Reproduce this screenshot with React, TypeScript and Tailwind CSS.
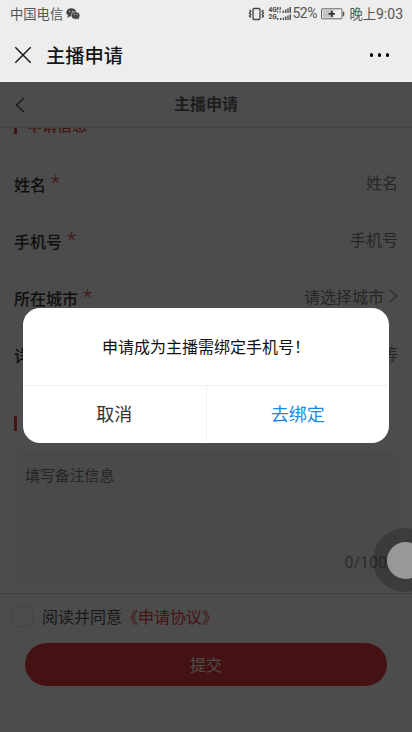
import type { ReactNode } from "react";

function StatusBar() {
  return (
    <div className="flex h-7 shrink-0 items-center justify-between pl-[10px] pr-[9px] text-[#555]">
      <div className="flex items-center gap-[3px]">
        <span className="text-[13.3px] leading-7">中国电信</span>
        <svg width="14" height="12" viewBox="0 0 14 12">
          <ellipse cx="5.3" cy="4.4" rx="5" ry="4.2" fill="#444" />
          <path d="M2 7.4 1.4 10l2.5-1.5z" fill="#444" />
          <ellipse cx="9.6" cy="7.6" rx="4.3" ry="3.6" fill="#444" stroke="#ededed" strokeWidth=".6" />
          <path d="m11 10.6 1.8 1.2-.4-2z" fill="#444" />
          <circle cx="3.7" cy="3.3" r=".65" fill="#ededed" />
          <circle cx="6.9" cy="3.3" r=".65" fill="#ededed" />
          <circle cx="8.2" cy="6.6" r=".55" fill="#ededed" />
          <circle cx="11" cy="6.6" r=".55" fill="#ededed" />
        </svg>
      </div>
      <div className="flex items-center">
        <svg width="17" height="14" viewBox="0 0 17 14" fill="none" stroke="#444">
          <rect x="5" y="1.5" width="7" height="11" rx="1" strokeWidth="1.3" />
          <path d="m1.5 3 1.3 1.5L1.5 6l1.3 1.5L1.5 9l1.3 1.5M15.5 3l-1.3 1.5L15.5 6l-1.3 1.5L15.5 9l-1.3 1.5" strokeWidth="1.4" />
        </svg>
        <div className="ml-[3px] flex w-[9px] flex-col font-[Roboto] text-[6.5px] font-bold leading-[7px] text-[#444]">
          <span>4G</span>
          <span>2G</span>
        </div>
        <svg className="mr-[1px]" width="14" height="14" viewBox="0 0 14 14" fill="#555">
          <path d="M0 0h1.3v3H0zM2.5 0h1.3v3H2.5zM0 4h1.3v1.5H0zM2.5 4h1.3v1.5H2.5zM5.5 3.5h1.5V6H5.5zM8 2.5h1.5V6H8zM10.3 1.2h1.4V6h-1.4zM12.5 0H14v6h-1.5zM0 11h1.5v2H0zM3 11h1.5v2H3zM5.7 10.5h1.5V13H5.7zM8 9.5h1.5V13H8zM10.3 8.5h1.4V13h-1.4zM12.5 7.3H14V13h-1.5z" />
        </svg>
        <span className="-mt-px w-[26px] font-[Roboto] text-[14px] tracking-[-0.4px]">52%</span>
        <svg className="ml-[3px] mr-[4px]" width="24" height="12" viewBox="0 0 24 12">
          <rect x=".5" y=".8" width="20.5" height="10" rx=".6" fill="#eee" stroke="#666" />
          <rect x="1.7" y="2" width="11" height="7.6" fill="#c4c4c4" />
          <path d="M7.5 5.8h6.4M10.7 2.7v6.2" stroke="#333" strokeWidth="1.7" />
          <path d="M22.5 3.7v4.5" stroke="#555" strokeWidth="1.5" />
        </svg>
        <span className="text-[13.3px]">晚上</span>
        <span className="w-[27px] font-[Roboto] text-[14px]">9:03</span>
      </div>
    </div>
  );
}

function BrowserBar() {
  return (
    <div className="flex h-[54px] shrink-0 items-center pl-[14px] pr-[23px]">
      <svg width="18" height="18" viewBox="0 0 18 18" stroke="#1c1c1c" strokeWidth="1.5">
        <path d="m1.3 1.3 15.4 15.4M16.7 1.3 1.3 16.7" />
      </svg>
      <h1 className="ml-[14px] text-[19.3px] font-medium leading-7 text-[#161616]">主播申请</h1>
      <div className="ml-auto flex gap-[4.5px]">
        <i className="size-[3.5px] rounded-full bg-black" />
        <i className="size-[3.5px] rounded-full bg-black" />
        <i className="size-[3.5px] rounded-full bg-black" />
      </div>
    </div>
  );
}

function Field({ label, required, children }: { label: string; required?: boolean; children: ReactNode }) {
  return (
    <div className="ml-[14px] flex h-[57px] shrink-0 items-center justify-between border-b border-[#f0f0f0] pr-[14px] text-[16px] leading-6">
      <div className="mt-[6px] flex font-medium text-[#333]">
        {label}
        {required && <span className="-mt-px ml-[5px] font-[Roboto] text-[21px] font-light text-[#e64340]">*</span>}
      </div>
      <div className="mt-[2px] flex items-center text-[#808080]">{children}</div>
    </div>
  );
}

function SectionTitle({ children }: { children: ReactNode }) {
  return (
    <div className="flex h-[54px] shrink-0 items-center pl-[14px] text-[15px] font-medium text-[#e64340]">
      <i className="mr-[10px] h-[15px] w-[3px] bg-[#e64340]" />
      <span className="-mt-[2px]">{children}</span>
    </div>
  );
}

function ApplyPage() {
  return (
    <div className="flex h-full flex-col bg-white">
      <header className="flex h-[46px] shrink-0 items-center border-b border-[#e6e6e6] px-[15px]">
        <svg width="10" height="16" viewBox="0 0 10 16" fill="none" stroke="#555" strokeWidth="1.4">
          <path d="M9 1 1.5 8 9 15" />
        </svg>
        <h2 className="-mt-[3px] flex-1 pr-[10px] text-center text-[16px] font-bold text-[#666]">主播申请</h2>
      </header>
      <div className="flex h-[465px] shrink-0 flex-col overflow-hidden">
        <div className="-mt-[29px] shrink-0">
          <SectionTitle>申请信息</SectionTitle>
        </div>
        <Field label="姓名" required>姓名</Field>
        <Field label="手机号" required>手机号</Field>
        <Field label="所在城市" required>
          请选择城市
          <svg className="ml-[5px]" width="9" height="14" viewBox="0 0 9 14" fill="none" stroke="#999" strokeWidth="1.3">
            <path d="m1 1 7 6-7 6" />
          </svg>
        </Field>
        <Field label="详细地址">街道、门牌号等</Field>
        <div className="mt-[15px] shrink-0">
          <SectionTitle>备注</SectionTitle>
        </div>
        <div className="mx-[14px] mt-[2px] flex h-[130px] shrink-0 flex-col justify-between rounded-[8px] bg-[#f7f7f7] px-[11px] pb-[9px] pt-[11px] text-[#808080]">
          <span className="text-[14.9px] leading-6">填写备注信息</span>
          <span className="self-end font-[Roboto] text-[16px] leading-5 text-[#999]">0/100</span>
        </div>
      </div>
      <footer className="flex flex-1 flex-col border-t border-[#ddd]">
        <div className="mt-[9px] flex h-[26px] items-center pl-[11px] text-[16px]">
          <i className="mr-[8px] size-[23px] rounded-full border border-[#dcdcdc]" />
          <span className="text-[#555]">阅读并同意</span>
          <span className="text-[#e64340]">《申请协议》</span>
        </div>
        <button className="mx-[25px] mt-[14px] h-[43px] rounded-full bg-[#e43c3c] pb-[2px] text-[16px] text-white">提交</button>
      </footer>
    </div>
  );
}

function BindDialog() {
  return (
    <div className="absolute inset-0 flex justify-center bg-black/70">
      <div className="mt-[225.5px] flex h-[135px] w-[366px] flex-col overflow-hidden rounded-[17px] bg-white">
        <p className="flex h-[77px] items-center justify-center text-[16px] text-[#111]">申请成为主播需绑定手机号！</p>
        <div className="flex flex-1 border-t border-[#f0f0f0] pb-[2px] text-[18px]">
          <button className="flex-1 border-r border-[#f0f0f0] text-[#333]">取消</button>
          <button className="flex-1 text-[#1989e6]">去绑定</button>
        </div>
      </div>
    </div>
  );
}

export default function App() {
  return (
    <div className="relative flex h-[732px] w-[412px] flex-col overflow-hidden bg-[#ededed] font-['Noto_Sans_CJK_SC',sans-serif]">
      <StatusBar />
      <BrowserBar />
      <main className="relative min-h-0 flex-1">
        <ApplyPage />
        <BindDialog />
        <div className="absolute -right-[25px] top-[446px] flex size-16 items-center justify-center rounded-full bg-black/20">
          <i className="size-[37px] rounded-full bg-[#989898]" />
        </div>
      </main>
    </div>
  );
}
